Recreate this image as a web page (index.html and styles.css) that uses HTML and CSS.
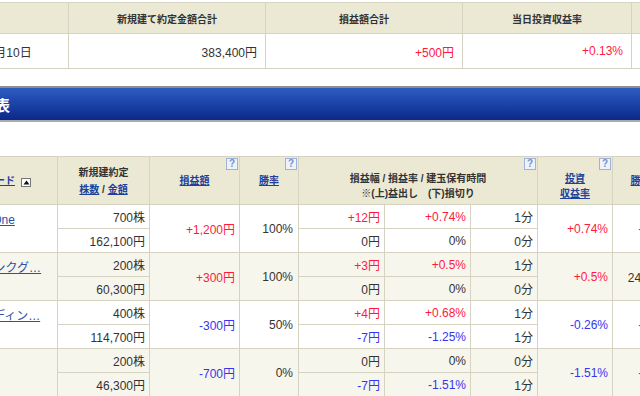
FILE: index.html
```html
<!DOCTYPE html>
<html lang="ja">
<head>
<meta charset="utf-8">
<title>取引成績</title>
<link rel="stylesheet" href="styles.css">
</head>
<body>
<div class="page">
  <table class="summary">
    <colgroup><col class="s0"><col class="s1"><col class="s2"><col class="s3"><col class="s4"></colgroup>
    <tr class="head"><th class="first">約定日</th><th>新規建て約定金額合計</th><th>損益額合計</th><th>当日投資収益率</th><th>取引回数</th></tr>
    <tr class="data"><td class="date">2024年1月10日</td><td class="num">383,400円</td><td class="num up">+500円</td><td class="num up">+0.13%</td><td class="num">8回</td></tr>
  </table>

  <div class="titlebar"><h2>成績表</h2></div>

  <table class="detail">
    <colgroup>
      <col class="c0"><col class="c1"><col class="c2"><col class="c3"><col class="c4"><col class="c5"><col class="c6"><col class="c7"><col class="c8"><col class="c9">
    </colgroup>
    <thead>
      <tr>
        <th><a href="#">銘柄コード</a><span class="sort"><svg width="7" height="5" viewBox="0 0 7 5"><path d="M0.5 4.5 L3.5 0.5 L6.5 4.5 Z" fill="#111"/></svg></span></th>
        <th class="two">新規建約定<br><a href="#">株数</a> / <a href="#">金額</a></th>
        <th class="help"><a href="#">損益額</a><span class="q">?</span></th>
        <th class="help"><a href="#">勝率</a><span class="q">?</span></th>
        <th class="help low" colspan="3">損益幅 / 損益率 / 建玉保有時間<br>※(上)益出し　(下)損切り<span class="q">?</span></th>
        <th class="help low"><a href="#">投資<br>収益率</a><span class="q">?</span></th>
        <th class="help"><a href="#">勝数</a><span class="q">?</span></th>
        <th></th>
      </tr>
    </thead>
    <tbody>
      <tr class="w">
        <td rowspan="2" class="name"><a href="#">メディアOne</a><br><span class="code">3788</span></td>
        <td class="num">700株</td>
        <td rowspan="2" class="num up">+1,200円</td>
        <td rowspan="2" class="num rate">100%</td>
        <td class="num up">+12円</td>
        <td class="num up">+0.74%</td>
        <td class="num">1分</td>
        <td rowspan="2" class="num up">+0.74%</td>
        <td rowspan="2" class="ctr">-</td>
        <td rowspan="2"></td>
      </tr>
      <tr class="w">
        <td class="num">162,100円</td>
        <td class="num">0円</td>
        <td class="num">0%</td>
        <td class="num">0分</td>
      </tr>

      <tr class="b">
        <td rowspan="2" class="name"><a href="#">ソフトバンクグ…</a><br><span class="code">9984</span></td>
        <td class="num">200株</td>
        <td rowspan="2" class="num up">+300円</td>
        <td rowspan="2" class="num rate">100%</td>
        <td class="num up">+3円</td>
        <td class="num up">+0.5%</td>
        <td class="num">1分</td>
        <td rowspan="2" class="num up">+0.5%</td>
        <td rowspan="2" class="ctr">24回</td>
        <td rowspan="2"></td>
      </tr>
      <tr class="b">
        <td class="num">60,300円</td>
        <td class="num">0円</td>
        <td class="num">0%</td>
        <td class="num">0分</td>
      </tr>

      <tr class="w">
        <td rowspan="2" class="name"><a href="#">Ｚホールディン…</a><br><span class="code">4689</span></td>
        <td class="num">400株</td>
        <td rowspan="2" class="num dn">-300円</td>
        <td rowspan="2" class="num rate">50%</td>
        <td class="num up">+4円</td>
        <td class="num up">+0.68%</td>
        <td class="num">1分</td>
        <td rowspan="2" class="num dn">-0.26%</td>
        <td rowspan="2" class="ctr">-</td>
        <td rowspan="2"></td>
      </tr>
      <tr class="w">
        <td class="num">114,700円</td>
        <td class="num dn">-7円</td>
        <td class="num dn">-1.25%</td>
        <td class="num">1分</td>
      </tr>

      <tr class="b">
        <td rowspan="2" class="name"><a href="#">トヨタ</a><br><span class="code">7203</span></td>
        <td class="num">200株</td>
        <td rowspan="2" class="num dn">-700円</td>
        <td rowspan="2" class="num rate">0%</td>
        <td class="num">0円</td>
        <td class="num">0%</td>
        <td class="num">0分</td>
        <td rowspan="2" class="num dn">-1.51%</td>
        <td rowspan="2" class="ctr">-</td>
        <td rowspan="2"></td>
      </tr>
      <tr class="b">
        <td class="num">46,300円</td>
        <td class="num dn">-7円</td>
        <td class="num dn">-1.51%</td>
        <td class="num">1分</td>
      </tr>
    </tbody>
  </table>
</div>
</body>
</html>
```

FILE: styles.css
```css
* { box-sizing: border-box; }
html, body {
  margin: 0;
  padding: 0;
  background: #fff;
  overflow: hidden;
}
body {
  width: 640px;
  height: 396px;
  font-family: "Liberation Sans", "Noto Sans CJK JP", sans-serif;
  font-size: 12px;
  color: #333;
}
a { color: #2a47a0; text-decoration: underline; }

.page {
  margin-left: -62px;
  padding-top: 2px;
  width: 900px;
}

table {
  border-collapse: collapse;
  table-layout: fixed;
}

/* summary table */
.summary { width: 843px; }
.s0 { width: 130px; }
.s1 { width: 197px; }
.s2 { width: 197px; }
.s3 { width: 169px; }
.s4 { width: 150px; }
.summary th, .summary td {
  border: 1px solid #d6d3c3;
  padding: 0 8px;
}
.summary th {
  background: #ebe8d3;
  font-size: 10px;
  font-weight: bold;
  text-align: center;
}
.summary th.first { text-align: left; padding-left: 10px; }
.summary .head { height: 31px; }
.summary .data { height: 35px; }
.summary .date { text-align: left; padding-left: 10px; }

.num { text-align: right; }
.up { color: #ff1a3d; }
.dn { color: #3535ee; }

/* title bar */
.titlebar {
  margin-top: 17px;
  height: 36px;
  border-top: 2px solid #8e8e8e;
  border-bottom: 2px solid #a9a9a9;
  background: linear-gradient(#2f5cc0, #1b43a8 50%, #0b2888);
  display: flex;
  align-items: center;
  padding-left: 27px;
}
.titlebar h2 {
  margin: 0;
  color: #fff;
  font-size: 15px;
  font-weight: bold;
  font-family: "Noto Sans CJK JP", sans-serif;
}

/* detail table */
.detail { width: 830px; margin-top: 34px; }
.c0 { width: 119px; }
.c1 { width: 92px; }
.c2 { width: 90px; }
.c3 { width: 59px; }
.c4 { width: 86px; }
.c5 { width: 86px; }
.c6 { width: 67px; }
.c7 { width: 75px; }
.c8 { width: 56px; }
.c9 { width: 100px; }

.detail th, .detail td {
  border: 1px solid #d6d3c3;
  padding: 0 4px;
}
.detail thead tr { height: 48px; }
.detail th {
  background: #ebe8d3;
  font-size: 10px;
  font-weight: bold;
  text-align: center;
  line-height: 15px;
  position: relative;
}
.detail th.two { line-height: 17px; }
.detail th.low { padding-top: 10px; }
.detail th a { color: #22409a; }

.sort {
  display: inline-block;
  width: 10px;
  height: 9px;
  margin-left: 6px;
  border: 1px solid #777;
  background: #fff;
  vertical-align: -1px;
  line-height: 0;
  text-align: center;
}
.sort svg { margin-top: 1px; }

.q {
  position: absolute;
  top: 1px;
  right: 1px;
  width: 12px;
  height: 12px;
  border: 1px solid #9fb3da;
  background: #eef2fa;
  color: #7592cb;
  font-size: 10px;
  font-weight: bold;
  line-height: 10px;
  text-align: center;
  font-family: "Liberation Sans", sans-serif;
}

.detail tbody tr { height: 24px; }
.detail tbody tr.w td { background: #fff; }
.detail tbody tr.b td { background: #f7f6ed; }
.detail td { font-size: 12px; }
.detail td.rate { padding-right: 5px; }
.detail td.ctr { text-align: center; }
.detail td.name {
  text-align: left;
  line-height: 18px;
  padding-left: 6px;
  white-space: nowrap;
  overflow: hidden;
}
.name a { color: #2f4fa8; }
.code { color: #333; }
```
